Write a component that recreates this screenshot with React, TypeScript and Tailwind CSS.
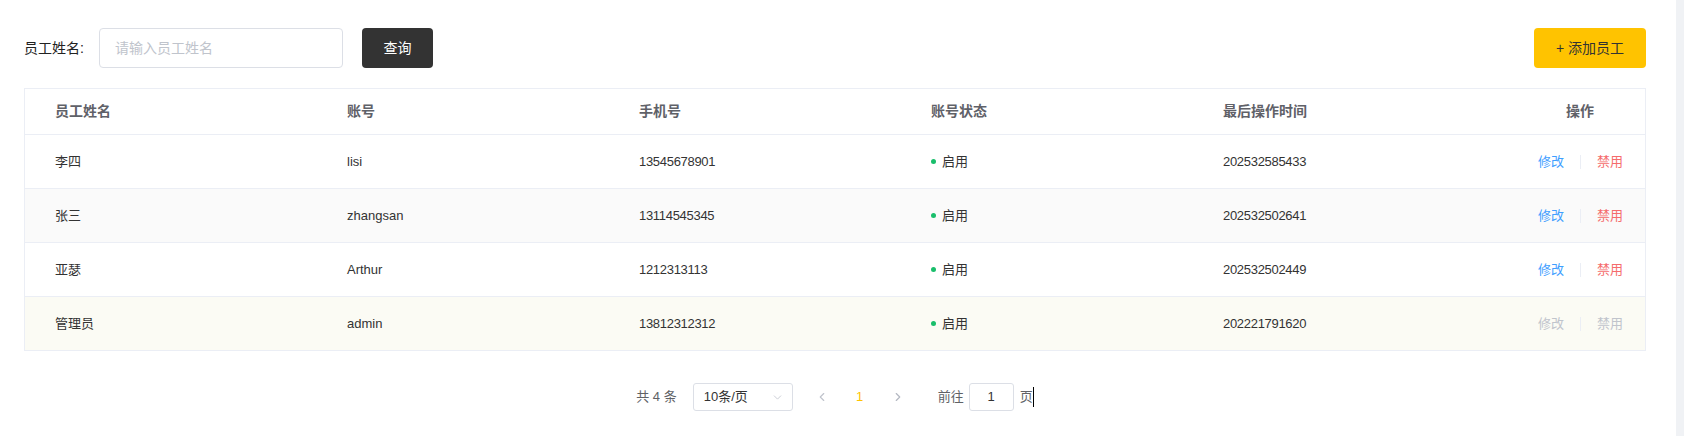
import { ChevronDown, ChevronLeft, ChevronRight } from "lucide-react";

type Employee = {
  name: string;
  account: string;
  phone: string;
  status: string;
  lastTime: string;
  locked?: boolean;
};

const employees: Employee[] = [
  { name: "李四", account: "lisi", phone: "13545678901", status: "启用", lastTime: "202532585433" },
  { name: "张三", account: "zhangsan", phone: "13114545345", status: "启用", lastTime: "202532502641" },
  { name: "亚瑟", account: "Arthur", phone: "1212313113", status: "启用", lastTime: "202532502449" },
  { name: "管理员", account: "admin", phone: "13812312312", status: "启用", lastTime: "202221791620", locked: true },
];

const rowBg = ["bg-white", "bg-[#fafafa]", "bg-white", "bg-[#fbfbf4]"];

const gridCols = "grid grid-cols-[292px_292px_292px_292px_292px_1fr]";

export default function App() {
  return (
    <div className="flex h-[436px] w-[1684px] bg-white font-['Liberation_Sans','Noto_Sans_CJK_SC',sans-serif] text-[13px] text-[#333]">
      <div className="flex-1 pl-[24px] pr-[30px] pt-[28px]">
        {/* search bar */}
        <div className="flex h-[40px] items-center justify-between">
          <div className="flex items-center">
            <span className="text-[14px] text-[#222]">员工姓名:</span>
            <input
              placeholder="请输入员工姓名"
              className="ml-[15px] h-[40px] w-[244px] rounded-[4px] border border-[#dcdfe6] bg-white px-[15px] text-[14px] outline-none placeholder:text-[#c0c4cc]"
            />
            <button
              type="button"
              className="ml-[19px] h-[40px] w-[71px] rounded-[4px] bg-[#333333] text-[14px] text-white"
            >
              查询
            </button>
          </div>
          <button
            type="button"
            className="h-[40px] w-[112px] rounded-[4px] bg-[#ffc300] text-[14px] text-[#333]"
          >
            + 添加员工
          </button>
        </div>

        {/* table */}
        <div className="mt-[20px] border-x border-t border-[#ebeef5]">
          <div className={`${gridCols} h-[46px] items-center border-b border-[#ebeef5] text-[14px] font-bold text-[#5f6168]`}>
            <div className="pl-[30px]">员工姓名</div>
            <div className="pl-[30px]">账号</div>
            <div className="pl-[30px]">手机号</div>
            <div className="pl-[30px]">账号状态</div>
            <div className="pl-[30px]">最后操作时间</div>
            <div className="pl-[81px]">操作</div>
          </div>
          {employees.map((e, i) => (
            <div
              key={e.account}
              className={`${gridCols} h-[54px] items-center border-b border-[#ebeef5] ${rowBg[i]}`}
            >
              <div className="pl-[30px]">{e.name}</div>
              <div className="pl-[30px]">{e.account}</div>
              <div className="pl-[30px] tracking-[-0.3px]">{e.phone}</div>
              <div className="flex items-center pl-[30px]">
                <span className="mr-[6px] h-[5px] w-[5px] rounded-full bg-[#19be6b]" />
                {e.status}
              </div>
              <div className="pl-[30px] tracking-[-0.3px]">{e.lastTime}</div>
              <div className="flex items-center pl-[53px]">
                <span className={e.locked ? "text-[#c0c4cc]" : "text-[#409eff]"}>修改</span>
                <span className="mx-[16px] h-[14px] w-px bg-[#ebeef5]" />
                <span className={e.locked ? "text-[#c0c4cc]" : "text-[#f56c6c]"}>禁用</span>
              </div>
            </div>
          ))}
        </div>

        {/* pagination */}
        <div className="mt-[32px] flex h-[28px] items-center justify-center text-[13px] text-[#606266]">
          <span>共 4 条</span>
          <div className="ml-[16px] flex h-[28px] w-[100px] items-center justify-between rounded-[3px] border border-[#dcdfe6] pl-[10px] pr-[8px] text-[#333]">
            <span>10条/页</span>
            <ChevronDown className="h-[13px] w-[13px] text-[#c0c4cc]" strokeWidth={1.5} />
          </div>
          <div className="ml-[10px] flex h-[28px] w-[38px] items-center justify-center text-[#c0c4cc]">
            <ChevronLeft className="h-[14px] w-[14px]" strokeWidth={2} />
          </div>
          <div className="flex h-[28px] w-[38px] items-center justify-center text-[#ffc300]">1</div>
          <div className="flex h-[28px] w-[38px] items-center justify-center text-[#b4b8c2]">
            <ChevronRight className="h-[14px] w-[14px]" strokeWidth={2} />
          </div>
          <span className="ml-[21px]">前往</span>
          <div className="ml-[5px] flex h-[28px] w-[45px] items-center justify-center rounded-[3px] border border-[#dcdfe6] text-[#333]">
            1
          </div>
          <span className="ml-[6px]">页</span>
          <span className="h-[20px] w-px bg-black" />
        </div>
      </div>
      <div className="w-[8px] bg-[#f0f2f5]" />
    </div>
  );
}
